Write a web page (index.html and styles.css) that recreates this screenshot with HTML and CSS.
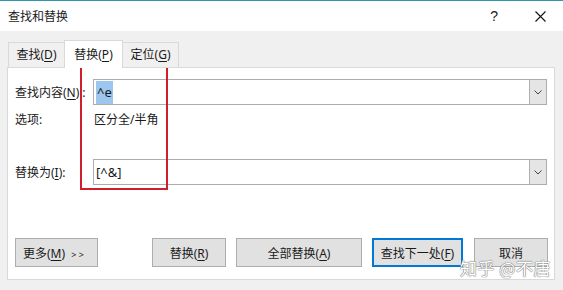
FILE: index.html
```html
<!DOCTYPE html>
<html lang="zh-CN">
<head>
    <meta charset="UTF-8">
    <title>查找和替换</title>
    <link rel="stylesheet" href="styles.css">
</head>
<body>
    <div class="dialog">
        <!-- Title bar -->
        <div class="titlebar">
            <span class="title">查找和替换</span>
            <span class="help">?</span>
            <span class="close">
                <svg width="11" height="11" viewBox="0 0 11 11"><path d="M0.5 0.5 L10.5 10.5 M10.5 0.5 L0.5 10.5" stroke="#111" stroke-width="1.1" fill="none"/></svg>
            </span>
        </div>

        <!-- Tabs -->
        <div class="tabs">
            <div class="tab tab-find">查找(<u>D</u>)</div>
            <div class="tab tab-replace active">替换(<u>P</u>)</div>
            <div class="tab tab-goto">定位(<u>G</u>)</div>
        </div>

        <!-- Replace panel -->
        <div class="panel">
            <div class="row">
                <label class="label">查找内容(<u>N</u>)<span class="colon">:</span></label>
                <div class="combo">
                    <div class="combo-text"><span class="selected">^e</span></div>
                    <div class="combo-btn">
                        <svg width="8" height="5" viewBox="0 0 8 5"><path d="M0.5 0.5 L4 4 L7.5 0.5" stroke="#444" stroke-width="1" fill="none"/></svg>
                    </div>
                </div>
            </div>
            <div class="row options">
                <span class="label">选项:</span>
                <span class="option-text">区分全/半角</span>
            </div>
            <div class="row replace-row">
                <label class="label">替换为(<u>I</u>):</label>
                <div class="combo">
                    <div class="combo-text">[^&amp;]</div>
                    <div class="combo-btn">
                        <svg width="8" height="5" viewBox="0 0 8 5"><path d="M0.5 0.5 L4 4 L7.5 0.5" stroke="#444" stroke-width="1" fill="none"/></svg>
                    </div>
                </div>
            </div>

            <div class="buttons">
                <button class="btn btn-more">更多(<u>M</u>) <span class="arrows">&gt; &gt;</span></button>
                <div class="spacer"></div>
                <button class="btn btn-replace">替换(<u>R</u>)</button>
                <button class="btn btn-all">全部替换(<u>A</u>)</button>
                <button class="btn btn-next">查找下一处(<u>F</u>)</button>
                <button class="btn btn-cancel">取消</button>
            </div>

            <!-- highlight box drawn over the form -->
            <div class="mark"></div>
        </div>

        <div class="watermark">知乎 @不唐</div>
    </div>
</body>
</html>
```

FILE: styles.css
```css
/* General */
body {
    margin: 0;
    padding: 0;
    background-color: #f0f0f0;
    font-family: "Noto Sans", "Noto Sans CJK SC", sans-serif;
    font-size: 12px;
    color: #1a1a1a;
}

.dialog {
    position: relative;
    width: 563px;
    height: 290px;
    overflow: hidden;
}

u {
    text-decoration: underline;
    text-underline-offset: 2px;
}

/* Title bar */
.titlebar {
    display: flex;
    align-items: center;
    height: 30px;
    background-color: #ffffff;
    border-top: 1px solid #2f95b3;
}

.title {
    margin-left: 8px;
    flex: 1;
}

.help {
    font-family: "Liberation Sans", sans-serif;
    font-size: 14px;
    margin-right: 37px;
}

.close {
    display: flex;
    margin-right: 17px;
}

/* Tabs */
.tabs {
    display: flex;
    align-items: flex-end;
    height: 36px;
    padding-left: 8px;
    position: relative;
    z-index: 1;
}

.tab {
    box-sizing: border-box;
    height: 25px;
    line-height: 24px;
    text-align: center;
    white-space: nowrap;
    border: 1px solid #d9d9d9;
    border-bottom: none;
    background-color: #f0f0f0;
}

.tab-find {
    width: 56px;
    border-right: none;
}

.tab-replace {
    width: 59px;
}

.tab-goto {
    width: 56px;
    border-left: none;
}

.tab.active {
    height: 28px;
    line-height: 28px;
    background-color: #ffffff;
    margin-bottom: -1px;
}

/* Panel */
.panel {
    position: relative;
    margin-left: 7px;
    width: 546px;
    height: 211px;
    background-color: #ffffff;
    border: 1px solid #d9d9d9;
}

.row {
    display: flex;
    align-items: center;
    padding-left: 7px;
}

.row:first-child {
    margin-top: 11px;
}

.label {
    width: 78px;
    flex-shrink: 0;
    white-space: nowrap;
}

.colon {
    margin-left: 3px;
}

.combo {
    display: flex;
    width: 452px;
    height: 24px;
    border: 1px solid #adadad;
}

.combo-text {
    flex: 1;
    padding-left: 2px;
    line-height: 24px;
    font-size: 13px;
}

.selected {
    background-color: #9dc6ee;
    padding: 2px 1px 3px 1px;
}

.combo-btn {
    width: 16px;
    display: flex;
    align-items: center;
    justify-content: center;
    background-color: #e5e5e5;
    border-left: 1px solid #adadad;
}

.options {
    margin-top: 4px;
    height: 20px;
}

.option-text {
    margin-left: 1px;
}

.replace-row {
    margin-top: 30px;
}

/* Buttons */
.buttons {
    display: flex;
    gap: 10px;
    padding-left: 7px;
    margin-top: 53px;
}

.spacer {
    flex: 1;
}

.btn {
    height: 29px;
    font-family: "Noto Sans", "Noto Sans CJK SC", sans-serif;
    font-size: 12px;
    color: #1a1a1a;
    background-color: #e1e1e1;
    border: 1px solid #adadad;
    padding: 0;
    white-space: nowrap;
}

.btn-more {
    width: 83px;
    text-align: left;
    padding-left: 7px;
}

.arrows {
    font-size: 9px;
    margin-left: 3px;
}

.btn-replace {
    width: 74px;
}

.btn-all {
    width: 126px;
}

.btn-next {
    width: 91px;
    border: 2px solid #0078d7;
}

.btn-cancel {
    width: 74px;
    margin-left: 1px;
    margin-right: 6px;
}

/* Red highlight frame */
.mark {
    position: absolute;
    left: 72px;
    top: 0;
    width: 84px;
    height: 120px;
    border: 2px solid #cf1f2b;
    border-top: none;
}

/* Watermark */
.watermark {
    position: absolute;
    left: 460px;
    top: 255px;
    font-family: "Noto Sans CJK SC", sans-serif;
    font-size: 17px;
    color: #ffffff;
    letter-spacing: 0.5px;
    text-shadow: 0 0 1px #7a7a7a, 0 0 1px #7a7a7a, 0 0 1px #7a7a7a;
}
```
